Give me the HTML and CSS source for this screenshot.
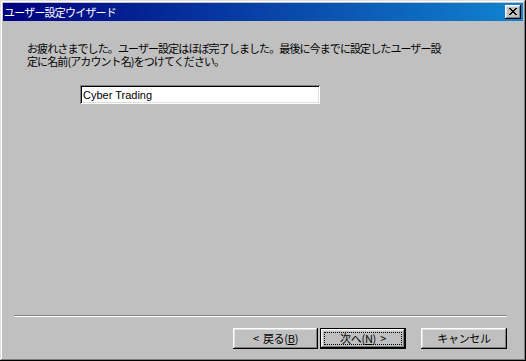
FILE: index.html
```html
<!DOCTYPE html>
<html lang="ja">
<head>
    <meta charset="UTF-8">
    <title>ユーザー設定ウイザード</title>
    <link rel="stylesheet" href="styles.css">
</head>
<body>
    <div class="window">
        <!-- Title bar -->
        <div class="titlebar">
            <span class="title">ユーザー設定ウイザード</span>
            <button class="close-btn" type="button" aria-label="閉じる">
                <svg width="8" height="7" viewBox="0 0 8 7">
                    <path d="M0 0h2v1h1v1h2v-1h1v-1h2v1h-1v1h-1v1h-1v1h1v1h1v1h1v1h-2v-1h-1v-1h-2v1h-1v1h-2v-1h1v-1h1v-1h1v-1h-1v-1h-1v-1h-1z" fill="#000"/>
                </svg>
            </button>
        </div>

        <!-- Wizard page -->
        <div class="page">
            <p class="message">お疲れさまでした。ユーザー設定はほぼ完了しました。最後に今までに設定したユーザー設定に名前(アカウント名)をつけてください。</p>
            <input class="account" type="text" value="Cyber Trading">
        </div>

        <div class="separator"></div>

        <div class="buttons">
            <button class="btn" type="button">&lt; 戻る(<u>B</u>)</button>
            <button class="btn default" type="button">次へ(<u>N</u>) &gt;</button>
            <button class="btn cancel" type="button">キャンセル</button>
        </div>
    </div>
</body>
</html>
```

FILE: styles.css
```css
/* Global */
body {
    margin: 0;
    background: #c0c0c0;
    font-family: "Noto Sans CJK JP", sans-serif;
    color: #000;
}

/* Window frame */
.window {
    width: 526px;
    height: 361px;
    box-sizing: border-box;
    padding: 3px;
    background: #c0c0c0;
    box-shadow: inset -1px -1px #000, inset 1px 1px #dfdfdf,
                inset -2px -2px #808080, inset 2px 2px #fff;
    display: flex;
    flex-direction: column;
}

/* Title bar */
.titlebar {
    height: 18px;
    background: linear-gradient(to right, #000080, #1084d0);
    display: flex;
    align-items: center;
    justify-content: space-between;
    padding: 0 2px 0 1px;
}

.title {
    color: #fff;
    font-size: 11px;
    letter-spacing: -0.8px;
    line-height: 13px;
}

.close-btn {
    width: 16px;
    height: 14px;
    padding: 0;
    border: none;
    background: #c0c0c0;
    box-shadow: inset -1px -1px #000, inset 1px 1px #fff,
                inset -2px -2px #808080, inset 2px 2px #dfdfdf;
    display: flex;
    align-items: center;
    justify-content: center;
    padding-bottom: 1px;
}

/* Page content */
.page {
    flex: 1;
    padding: 21px 0 0 24px;
}

.message {
    margin: 0;
    width: 418px;
    font-size: 11px;
    letter-spacing: -0.9px;
    line-height: 13px;
}

.account {
    display: block;
    margin: 17px 0 0 53px;
    width: 240px;
    height: 19px;
    box-sizing: border-box;
    border: none;
    padding: 2px 3px;
    background: #fff;
    font-family: "Liberation Sans", sans-serif;
    font-size: 11px;
    color: #000;
    box-shadow: inset 1px 1px #808080, inset -1px -1px #fff,
                inset 2px 2px #000, inset -2px -2px #dfdfdf;
    outline: none;
}

/* Separator */
.separator {
    margin: 0 16px 0 11px;
    border-top: 1px solid #808080;
    border-bottom: 1px solid #fff;
    height: 0;
}

/* Buttons */
.buttons {
    display: flex;
    justify-content: flex-end;
    padding: 11px 16px 9px 0;
}

.btn {
    position: relative;
    width: 85px;
    height: 21px;
    padding: 0;
    border: none;
    background: #c0c0c0;
    font-family: "Noto Sans CJK JP", sans-serif;
    font-size: 11px;
    letter-spacing: -0.3px;
    word-spacing: 2px;
    line-height: 13px;
    color: #000;
    box-shadow: inset -1px -1px #000, inset 1px 1px #fff,
                inset -2px -2px #808080, inset 2px 2px #dfdfdf;
}

.btn.default {
    width: 86px;
    margin-left: 2px;
    box-shadow: inset 0 0 0 1px #000,
                inset -2px -2px #000, inset 2px 2px #fff,
                inset -3px -3px #808080, inset 3px 3px #dfdfdf;
}

/* focus rectangle */
.btn.default::after {
    content: "";
    position: absolute;
    top: 4px;
    left: 4px;
    right: 4px;
    bottom: 4px;
    border: 1px dotted #000;
}

.btn.cancel {
    width: 86px;
    margin-left: 15px;
}
```
